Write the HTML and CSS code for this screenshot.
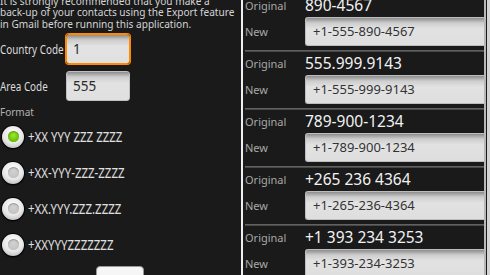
FILE: index.html
```html
<!DOCTYPE html>
<html lang="en">
<head>
    <meta charset="UTF-8">
    <meta name="viewport" content="width=device-width, initial-scale=1.0">
    <title>Phone Number Formatter</title>
    <link rel="stylesheet" href="styles.css">
</head>
<body>
    <div class="frame">
        <!-- Settings screen -->
        <section class="screen setup">
            <p class="intro">It is strongly recommended that you make a<br>back-up of your contacts using the Export feature<br>in Gmail before running this application.</p>

            <div class="field">
                <label class="field-label"><span class="narrow">Country Code</span></label>
                <div class="input focused">1</div>
            </div>
            <div class="field">
                <label class="field-label"><span class="narrow">Area Code</span></label>
                <div class="input">555</div>
            </div>

            <p class="group-label">Format</p>
            <ul class="radios">
                <li class="radio checked"><span class="dot"></span><span class="narrow">+XX YYY ZZZ ZZZZ</span></li>
                <li class="radio"><span class="dot"></span><span class="narrow">+XX-YYY-ZZZ-ZZZZ</span></li>
                <li class="radio"><span class="dot"></span><span class="narrow">+XX.YYY.ZZZ.ZZZZ</span></li>
                <li class="radio"><span class="dot"></span><span class="narrow">+XXYYYZZZZZZZ</span></li>
            </ul>

            <div class="button"></div>
        </section>

        <div class="divider"></div>

        <!-- Preview screen -->
        <section class="screen preview">
            <div class="list">
                <div class="entry">
                    <div class="sep"></div>
                    <div class="line"><span class="tag">Original</span><span class="number">890-4567</span></div>
                    <div class="line"><span class="tag">New</span><div class="box">+1-555-890-4567</div></div>
                </div>
                <div class="entry">
                    <div class="sep"></div>
                    <div class="line"><span class="tag">Original</span><span class="number">555.999.9143</span></div>
                    <div class="line"><span class="tag">New</span><div class="box">+1-555-999-9143</div></div>
                </div>
                <div class="entry">
                    <div class="sep"></div>
                    <div class="line"><span class="tag">Original</span><span class="number">789-900-1234</span></div>
                    <div class="line"><span class="tag">New</span><div class="box">+1-789-900-1234</div></div>
                </div>
                <div class="entry">
                    <div class="sep"></div>
                    <div class="line"><span class="tag">Original</span><span class="number">+265 236 4364</span></div>
                    <div class="line"><span class="tag">New</span><div class="box">+1-265-236-4364</div></div>
                </div>
                <div class="entry">
                    <div class="sep"></div>
                    <div class="line"><span class="tag">Original</span><span class="number">+1 393 234 3253</span></div>
                    <div class="line"><span class="tag">New</span><div class="box">+1-393-234-3253</div></div>
                </div>
            </div>
            <div class="scrollbar"></div>
        </section>

        <div class="edge"></div>
    </div>
</body>
</html>
```

FILE: styles.css
```css
/* General page */
body {
    margin: 0;
    background-color: #1a1a1a;
    font-family: "Noto Sans", "Open Sans", sans-serif;
    color: #d8d8d8;
}

.frame {
    display: flex;
    width: 490px;
    height: 275px;
    overflow: hidden;
}

.screen {
    background-color: #1a1a1a;
    overflow: hidden;
}

.divider {
    width: 2px;
    background-color: #eeeeee;
}

.edge {
    width: 3px;
    background-color: #d4d4d4;
}

/* the old screenshots squeeze these labels sideways */
.narrow {
    display: inline-block;
    white-space: nowrap;
    transform: scaleX(0.76);
    transform-origin: left center;
}

/* Settings screen */
.setup {
    width: 241px;
    flex: none;
}

.intro {
    margin: -4px 0 0;
    font-size: 10.1px;
    line-height: 11.3px;
    color: #d4d4d4;
    white-space: nowrap;
}

.field {
    display: flex;
    align-items: center;
    height: 30px;
    margin-top: 4px;
}

.field + .field {
    margin-top: 7px;
}

.field-label {
    width: 66px;
    flex: none;
    font-size: 13px;
    color: #dcdcdc;
}

.input {
    box-sizing: border-box;
    width: 64px;
    height: 30px;
    padding-left: 6px;
    border: 1px solid #c0c0c0;
    border-radius: 3px;
    background: linear-gradient(#8c8c8c, #cdcdcd 5px, #e2e2e2 11px, #e0e0e0);
    color: #2a2a2a;
    font-size: 13.5px;
    line-height: 28px;
}

.input.focused {
    border-color: #ff8a00;
    box-shadow: 0 0 0 1px #ff8a00;
}

.group-label {
    margin: 4px 0 0;
    font-size: 10px;
    line-height: 14px;
    color: #b0b0b0;
}

.radios {
    list-style: none;
    margin: 0;
    padding: 0;
}

.radio {
    display: flex;
    align-items: center;
    gap: 4px;
    height: 36px;
    padding-left: 2px;
    font-size: 14px;
    color: #e0e0e0;
}

.radio .narrow {
    transform: scaleX(0.82);
}

.dot {
    position: relative;
    width: 22px;
    height: 22px;
    flex: none;
    border-radius: 50%;
    background: radial-gradient(circle at 50% 35%, #ffffff, #e6e6e6 55%, #a8a8a8);
    box-shadow: 0 0 0 1px #050505, 0 1px 2px #000;
}

.dot::after {
    content: "";
    position: absolute;
    left: 5.5px;
    top: 5.5px;
    width: 11px;
    height: 11px;
    border-radius: 50%;
    background: radial-gradient(circle at 50% 40%, #d2d2d2, #bdbdbd);
    box-shadow: inset 0 1px 1px rgba(0, 0, 0, 0.25);
}

.radio.checked .dot::after {
    background: radial-gradient(circle at 50% 40%, #9ee82a, #62c000 70%, #3f8f00);
}

.button {
    width: 48px;
    height: 30px;
    margin: 3px 0 0 96px;
    box-sizing: border-box;
    border: 1px solid #9a9a9a;
    border-radius: 4px;
    background-color: #f6f6f6;
}

/* Preview screen */
.preview {
    display: flex;
    width: 244px;
    flex: none;
}

.list {
    flex: 1;
    margin-top: -8px;
    padding-left: 2px;
}

.scrollbar {
    width: 2px;
    margin-right: 1px;
    background-color: #b8b8b8;
}

.entry {
    height: 58px;
}

.sep {
    height: 2px;
    background: linear-gradient(#6e6e6e, #3c3c3c);
}

.line {
    display: flex;
    align-items: center;
}

.entry .line:nth-child(2) {
    height: 22px;
    margin-bottom: 1px;
}

.tag {
    width: 60px;
    flex: none;
    font-size: 11px;
    color: #a8a8a8;
}

.number {
    font-size: 15.5px;
    color: #f2f2f2;
}

.box {
    flex: 1;
    box-sizing: border-box;
    height: 29px;
    padding-left: 7px;
    border: 1px solid #bdbdbd;
    border-right: none;
    border-radius: 3px 0 0 3px;
    background: linear-gradient(#8c8c8c, #cdcdcd 5px, #e2e2e2 11px, #dedede);
    color: #333333;
    font-size: 13px;
    line-height: 27px;
}
```
